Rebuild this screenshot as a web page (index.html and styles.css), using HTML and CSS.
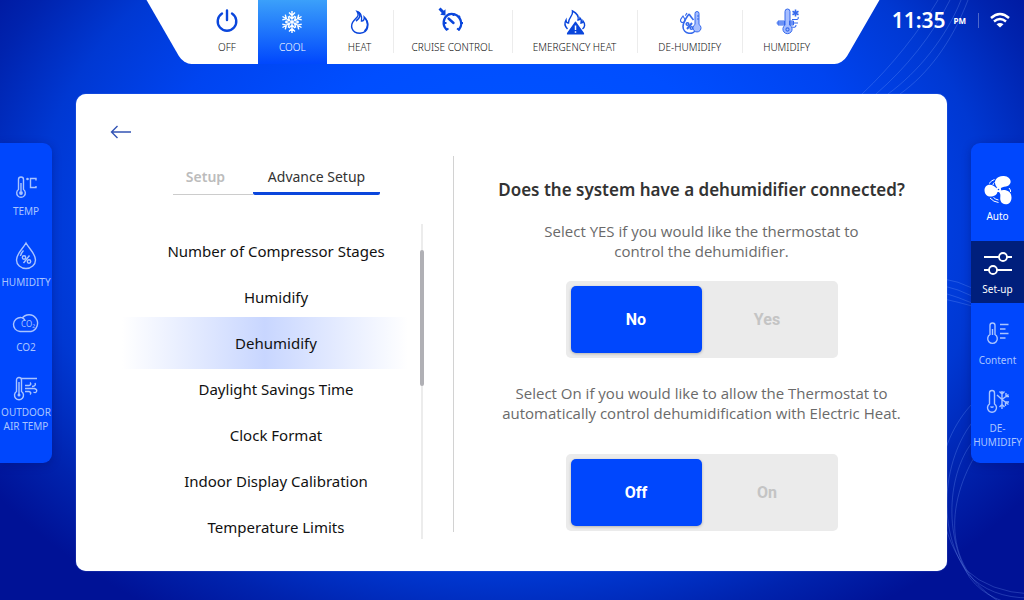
FILE: index.html
```
<!DOCTYPE html>
<html lang="en">
<head>
<meta charset="utf-8">
<meta name="viewport" content="width=device-width, initial-scale=1">
<title>Thermostat – Advance Setup</title>
<link rel="stylesheet" href="styles.css">
</head>
<body>
<svg class="backdrop" viewBox="0 0 1024 600" preserveAspectRatio="xMaxYMid slice" aria-hidden="true">
  <path d="M938 0C920 30 892 66 862 94M950 0C932 36 906 68 876 94M961 0C946 38 918 72 888 94M968 0C952 42 928 74 900 94"/>
  <path d="M944 279q14 2 28 9M944 286q14 3 28 10M944 293q14 4 28 10M944 299q14 3 28 7"/>
  <path d="M980 396C940 432 920 500 966 570Q990 592 1030 594M984 410C948 440 930 520 968 574Q990 598 1030 598M980 434C950 460 940 530 970 578Q990 604 1030 606M986 440C954 480 930 560 1000 602"/>
</svg>
<header class="topbar">
  <nav class="modes" aria-label="Mode">
    <button class="mode" type="button">
      <svg class="icon" viewBox="0 0 24 24"><path class="heavy" d="M7 3.600a9.300 9.300 0 1 0 10 0M12 .500v9.500"/></svg>
      <span>OFF</span>
    </button>
    <button class="mode wide active" type="button" aria-pressed="true">
      <svg class="icon snow" viewBox="0 0 24 24"><g id="arm"><path d="M12 12V1M9 2.500l3 3 3-3M9 6l3 3L15 6"/></g><use href="#arm" transform="rotate(60 12 12)"/><use href="#arm" transform="rotate(120 12 12)"/><use href="#arm" transform="rotate(180 12 12)"/><use href="#arm" transform="rotate(240 12 12)"/><use href="#arm" transform="rotate(300 12 12)"/></svg>
      <span>COOL</span>
    </button>
    <button class="mode wide" type="button">
      <svg class="icon" viewBox="0 0 24 24"><path d="M9 1.500c5 1.500 5 5.500 4.500 9.500 2.200 0 3-1.800 2.700-4 5.800 6 4.800 15.500-4.200 16.300-8.500-.3-10.500-7.800-6-12.800C9.800 6.500 11.500 5.500 9 1.500z"/><path class="bold" d="M9.500 2c4 2.500 3 5.500-1.500 9M17 8c3.500 4 3.500 9.500-.5 13"/></svg>
      <span>HEAT</span>
    </button>
    <button class="mode divided" type="button">
      <svg class="icon" viewBox="0 0 24 24"><path class="heavy" d="M6.500 19.500A9.500 9.500 0 0 1 8.500 4.500a9.500 9.500 0 0 1 10.500 15M8.500 8.500l5 4.500"/><path class="fat" d="M13.500 3v3M20 6l-2.200 1.500M23 13h-3M3.500 13h3M19.500 20l-2.500-1.500M6 20l2.500-1.500"/><path class="fill" d="M5.500 5.500V-.800L3.800.800.500-2.500-1.500-.500 1.800 3 .300 4.800z"/></svg>
      <span>CRUISE CONTROL</span>
    </button>
    <button class="mode wide divided" type="button">
      <svg class="icon low" viewBox="0 0 24 24"><path d="M4.500 19C1.500 16 1.500 12.500 3 10c0 2 1 3 2.500 3C5 8 10.500 6 9.500 1c4 2 6.500 5 5.500 9 1.500 0 2-1 2-2 1.500 1.500 1.500 3.500 1 5 1.200 0 2-1 2-2 2.500 3 2 6-.5 8"/><path class="fill" d="M12.500 11.500Q13 11.500 13.500 12.500L21 23Q21.500 24.500 20.500 24.500h-16Q3.500 24.500 4 23L11.500 12.500Q12 11.500 12.500 11.500z"/><path class="mark" d="M12.500 15.500v4.500M12.500 21.200v1.500"/></svg>
      <span>EMERGENCY HEAT</span>
    </button>
    <button class="mode wide divided pale" type="button">
      <svg class="icon" viewBox="0 0 24 24"><path class="bold" d="M11 4C7.500 9 5 12 5 16.500a6.800 6.800 0 0 0 13.300 2M11 4c2 3 3 4 4.500 6"/><path d="M5 6C3.500 8 2.500 9 2.500 10.200a2.200 2.200 0 0 0 4.500 0C7 9 6 8 5 6zM9 3C8 4.500 7.500 5 7.500 5.800"/><path class="fat" d="M14 13l-5 6"/><circle class="bold" cx="9.500" cy="14" r="1.300"/><circle class="bold" cx="13.500" cy="18" r="1.300"/><path class="tint" d="M17 3.500a2 2 0 0 1 4 0v11a4 4 0 1 1-4 0zM21 6h-2M21 9h-2"/></svg>
      <span>DE-HUMIDIFY</span>
    </button>
    <button class="mode wide divided pale" type="button">
      <svg class="icon" viewBox="0 0 24 24"><path class="tint" d="M3 11h6.500v4H3zM14.500 11h4v4h-4zM10 1.500a2.500 2.500 0 0 1 5 0v13.700a4.600 4.600 0 1 1-5 0z"/><circle cx="12.500" cy="19.500" r="1.600"/><path d="M1.500 13H9M15 13h8M17 9.500h5q2-1 1-2.500M17 17q4 1 4-2"/><path class="bold" d="M20.500-.500v7M17.500 1.200l6 3.500M23.500 1.200l-6 3.500"/></svg>
      <span>HUMIDIFY</span>
    </button>
  </nav>
  <div class="status">
    <time class="clock">11:35</time><span class="meridiem">PM</span>
    <svg class="wifi" viewBox="0 0 20 15" role="img" aria-label="Wi-Fi"><path d="M1 5Q10-3 19 5M4 8.500Q10 3.500 16 8.500"/><path class="fill" d="M6.500 11.200q3.500-2.500 7 0L10 14.500z"/></svg>
  </div>
</header>
<div class="stage">
  <aside class="rail left">
    <div class="reading">
      <svg class="icon" viewBox="0 0 24 24"><path d="M4.500 4.500a2.500 2.500 0 0 1 5 0v10a4.300 4.300 0 1 1-5 0zM7 8v8M22 5.500V3.500h-5.500v9H22V11"/><circle class="fill" cx="7" cy="18" r="1.900"/><circle class="fill" cx="13.500" cy="4" r="1.300"/></svg>
      <span>TEMP</span>
    </div>
    <div class="reading">
      <svg class="icon tall" viewBox="0 0 24 30"><path d="M12 3C9 8.500 2.500 13.500 2.500 20a9.500 8.500 0 0 0 19 0C21.500 13.500 15 8.500 12 3zM6.500 16q.5-3 3-5.500M9.500 23l6-7.500"/><circle cx="10" cy="17.500" r="1.700"/><circle cx="15" cy="21.500" r="1.700"/></svg>
      <span>HUMIDITY</span>
    </div>
    <div class="reading">
      <svg class="icon cloud" viewBox="0 0 28 24"><path d="M9 6.500A6.800 6.800 0 0 0 8 20.500h11A8.500 8.500 0 1 0 10 7.500M6 7q5-2 7 2.500"/><text x="9" y="16">CO₂</text></svg>
      <span>CO2</span>
    </div>
    <div class="reading">
      <svg class="icon" viewBox="0 0 24 24"><path d="M2.500 4a2.500 2.500 0 0 1 5 0v11.500a4.500 4.500 0 1 1-5 0zM5 6v12M7.500 2.500H23M11 9.500h4q3-1 1-3M18 10.500q4.500-.5 3-3.500M11 12.500h9.500q3 1 2 3t-3 .5M11 15.500h4q3 1 1 3"/><circle class="fill" cx="5" cy="19" r="1.500"/></svg>
      <span>OUTDOOR AIR TEMP</span>
    </div>
  </aside>

  <main class="card">
    <section class="menu">
      <button class="back" type="button" aria-label="Back"><svg viewBox="0 0 22 14"><path d="M21 7H1.500M7.500 1l-6 6 6 6"/></svg></button>
      <div class="tabs" role="tablist">
        <button class="tab" type="button" role="tab" aria-selected="false">Setup</button>
        <button class="tab current" type="button" role="tab" aria-selected="true">Advance Setup</button>
      </div>
      <div class="picker">
        <div class="options">
          <button class="option" type="button">Number of Compressor Stages</button>
          <button class="option" type="button">Humidify</button>
          <button class="option chosen" type="button">Dehumidify</button>
          <button class="option" type="button">Daylight Savings Time</button>
          <button class="option" type="button">Clock Format</button>
          <button class="option" type="button">Indoor Display Calibration</button>
          <button class="option" type="button">Temperature Limits</button>
        </div>
        <div class="track"><div class="thumb"></div></div>
      </div>
    </section>
    <section class="detail">
      <h1>Does the system have a dehumidifier connected?</h1>
      <p>Select YES if you would like the thermostat to<br>control the dehumidifier.</p>
      <div class="toggle" role="group" aria-label="Dehumidifier connected">
        <button class="choice on" type="button" aria-pressed="true">No</button>
        <button class="choice" type="button" aria-pressed="false">Yes</button>
      </div>
      <p>Select On if you would like to allow the Thermostat to<br>automatically control dehumidification with Electric Heat.</p>
      <div class="toggle last" role="group" aria-label="Dehumidification with Electric Heat">
        <button class="choice on" type="button" aria-pressed="true">Off</button>
        <button class="choice" type="button" aria-pressed="false">On</button>
      </div>
    </section>
  </main>

  <nav class="rail right" aria-label="Controls">
    <button class="control bright fan" type="button">
      <svg class="icon" viewBox="0 0 28 30"><path class="fill" d="M13 12.500C8 6 13 .500 20 1c8 .5 9 9 2 10.500-3 .5-4 .5-6 2.500zM13 14.500C9.500 8 1 8.500.500 15c0 6 5 7.500 9 6 3-1 4-2.500 4-5zM16 15.500c5-1.500 11.500 0 11.500 7 0 8.500-9.500 8.500-11 3-.8-3.500 1-6-1.500-8.500z"/><circle class="hub" cx="14.500" cy="14.500" r="1.700"/><path class="whisk" d="M5 8.500Q8 5 10.500 4.500M25 13q2 2 1.500 4M6 23q3.500 4 8.500 4.500M9.500 22.500q2 2 5 2.500M9 10Q9 8 10.500 7.500"/></svg>
      <span>Auto</span>
    </button>
    <button class="control bright selected" type="button">
      <svg class="icon" viewBox="0 0 28 26"><path d="M0 7h15M23 7h5M0 20h5M13 20h15"/><circle cx="19" cy="7" r="4"/><circle cx="9" cy="20" r="4"/></svg>
      <span>Set-up</span>
    </button>
    <button class="control" type="button">
      <svg class="icon" viewBox="0 0 24 24"><path d="M4 4.500a2.500 2.500 0 0 1 5 0v9a4.800 4.800 0 1 1-5 0zM6.500 8v6M14 3.500h8.500M14 8h5.500M14 12.500h8.500M14 17h5.500"/></svg>
      <span>Content</span>
    </button>
    <button class="control" type="button">
      <svg class="icon" viewBox="0 0 24 24"><path d="M3.500 4a2.500 2.500 0 0 1 5 0v11a4.500 4.500 0 1 1-5 0zM4.500 17.500q1.500 1.500 3 0M16 10.500V2M16 10.500V20M16 10.500l6.500-5M16 10.500l6.500 5M16 10.500L11 6M13.500 2.500L16 5l2.500-2.500M20 4v3.500h3M23 13h-3.500v4M13.500 18L16 15.500l2.500 2.500"/></svg>
      <span>DE-HUMIDIFY</span>
    </button>
  </nav>
</div>
</body>
</html>
```
FILE: styles.css
```
* { box-sizing: border-box; }

body {
  margin: 0;
  min-height: 100vh;
  display: flex;
  flex-direction: column;
  font-family: "Noto Sans", "Open Sans", sans-serif;
  font-size: 15px;
  color: #333;
  background: radial-gradient(ellipse 62% 78% at 50% 37%, #0058ff 0%, #004eff 38%, #0044f0 58%, #0038d2 75%, #0023ae 88%, #001296 100%);
  overflow-x: hidden;
}

button {
  margin: 0;
  padding: 0;
  border: 0;
  background: none;
  color: inherit;
  font: inherit;
  cursor: pointer;
}

svg { fill: none; stroke: currentColor; stroke-width: 1.4; display: block; overflow: visible; }
.fill { fill: currentColor; stroke: none; }

.backdrop {
  position: absolute;
  inset: 0;
  width: 100%;
  height: 100%;
  z-index: -1;
  color: rgba(130, 170, 255, 0.25);
  stroke-width: 1;
  overflow: hidden;
}

/* Mode strip */
.topbar {
  display: flex;
  justify-content: space-between;
  align-items: flex-start;
  padding-left: 196px;
}

.modes {
  position: relative;
  display: flex;
  height: 64px;
  background: #fff;
}
.modes::before, .modes::after {
  content: "";
  position: absolute;
  z-index: -1;
  top: 0;
  bottom: 0;
  width: 120px;
  background: #fff;
}
.modes::before { left: -31px; transform: skewX(30deg); border-bottom-left-radius: 8px; }
.modes::after { right: -30px; transform: skewX(-30deg); border-bottom-right-radius: 8px; }

.mode {
  position: relative;
  display: flex;
  flex-direction: column;
  align-items: center;
  gap: 6px;
  padding: 10px 19px 0;
  font-size: 10px;
  line-height: 14px;
  font-weight: 300;
  white-space: nowrap;
  color: #111;
}
.mode.wide { padding: 10px 21px 0; }
.mode .icon { width: 24px; height: 24px; color: #0a46dc; }
.mode .heavy { stroke-width: 2.4; stroke-linecap: round; }
.mode .fat { stroke-width: 2; }
.mode .bold { stroke-width: 1.6; }
.mode .mark { stroke: #fff; stroke-width: 1.5; }
.mode .tint { fill: #a5bdff; stroke-width: 1; }
.mode.pale .icon { color: #3569ec; stroke-width: 1.1; }
.mode.active { color: #fff; background: linear-gradient(#3ba0fa, #0047fd); }
.mode.active .icon { color: #fff; }
.mode.divided::before {
  content: "";
  position: absolute;
  left: 0;
  top: 10px;
  width: 1px;
  height: 43px;
  background: #ececec;
}

.status {
  display: flex;
  align-items: center;
  padding: 6px 14px 0 0;
  color: #fff;
}
.clock { font-size: 21px; line-height: 28px; font-weight: 600; }
.meridiem { margin-left: 8px; font-size: 8px; font-weight: 700; }
.wifi {
  width: 32px;
  height: 15px;
  margin-left: 12px;
  padding-left: 11px;
  border-left: 1px solid rgba(255, 255, 255, 0.3);
  stroke-width: 2.4;
}

/* Page body: side rails around the card */
.stage {
  flex: 1;
  display: grid;
  grid-template-columns: 52px 1fr 53px;
  gap: 24px;
  padding: 30px 0 29px;
}

.rail {
  align-self: start;
  margin-top: 49px;
  min-height: 320px;
  display: flex;
  flex-direction: column;
  align-items: center;
  font-size: 10px;
  line-height: 14px;
  text-align: center;
  color: #a9c4ff;
  background: #0047fd;
  box-shadow: 0 2px 8px rgba(0, 20, 110, 0.4);
}
.rail .icon { width: 24px; height: 24px; }
.left { border-radius: 0 9px 9px 0; padding-top: 32px; gap: 22px; }
.right { border-radius: 9px 0 0 9px; gap: 22px; }

.reading {
  display: flex;
  flex-direction: column;
  align-items: center;
  gap: 5px;
}
.reading .tall { height: 30px; }
.reading .cloud { width: 28px; height: 24px; }
.reading .cloud text { fill: currentColor; stroke: none; font-size: 8px; }

.control {
  display: flex;
  flex-direction: column;
  align-items: center;
  gap: 8px;
  width: 100%;
}
.control.bright { color: #fff; }
.control.bright .icon { width: 28px; height: 30px; stroke-width: 1.8; }
.control.fan { padding-top: 32px; gap: 4px; margin-bottom: -4px; }
.control.fan .whisk { stroke-width: 1; }
.fan .hub { fill: #0047fd; }
.control.selected { background: #001f7c; height: 62px; padding-top: 7px; gap: 4px; margin-bottom: -4px; }

/* Card */
.card {
  display: grid;
  grid-template-columns: 377fr 494fr;
  background: #fff;
  border-radius: 10px;
  box-shadow: 0 0 1px #9fc0ff;
}

.menu { display: flex; flex-direction: column; padding-top: 31px; }
.back { align-self: flex-start; margin-left: 34px; color: #3354b4; }
.back svg { width: 22px; height: 14px; }

.tabs {
  display: grid;
  grid-template-columns: 80fr 127fr;
  align-items: end;
  margin: 24px 73px 0 97px;
  font-size: 14px;
  line-height: 20px;
}
.tab {
  height: 31px;
  padding: 0 15px 4px 0;
  font-weight: 600;
  color: #bcbcbc;
  border-bottom: 1px solid #ccc;
}
.tab.current {
  height: 32px;
  padding: 0 0 1px;
  font-weight: 400;
  color: #333;
  border-bottom: 3px solid #0a46dc;
  border-radius: 2px;
}

.picker { display: flex; justify-content: space-between; margin: 29px 29px 32px 46px; }
.options {
  display: flex;
  flex-direction: column;
  width: 286px;
  padding-top: 4px;
  margin-bottom: -11px;
}
.option {
  height: 46px;
  padding-left: 22px;
  color: #111;
  text-align: center;
}
.option.chosen {
  height: 52px;
  margin: -3px 0;
  background: linear-gradient(90deg, rgba(200, 215, 255, 0), #c8d6ff 50%, rgba(200, 215, 255, 0));
}
.track {
  display: flex;
  justify-content: center;
  padding-top: 26px;
  width: 4px;
  background: linear-gradient(#ececec, #ececec) center / 2px 100% no-repeat;
}
.thumb { width: 4px; height: 136px; border-radius: 2px; background: #b0b0b5; }

.detail {
  display: flex;
  flex-direction: column;
  align-items: center;
  margin: 62px 0 39px;
  padding: 21px 0 0 2px;
  border-left: 1px solid #d2d2d2;
  text-align: center;
}
.detail h1 { margin: 0 0 18px; font-size: 17px; line-height: 26px; font-weight: 600; }
.detail p { margin: 0; line-height: 20px; color: #6a6a6a; font-family: "Open Sans", "Noto Sans", sans-serif; }

.toggle {
  display: grid;
  grid-template-columns: 1fr 1fr;
  width: 272px;
  height: 77px;
  margin: 20px 0 25px;
  padding: 5px;
  background: #ebebeb;
  border-radius: 5px;
}
.toggle.last { margin: 31px 0 0; }
.choice {
  font: 700 16px Roboto, sans-serif;
  color: #c4c4c4;
  border-radius: 5px;
}
.choice.on { color: #fff; background: #0047fd; box-shadow: 0 1px 3px rgba(0, 0, 0, 0.25); }
```
